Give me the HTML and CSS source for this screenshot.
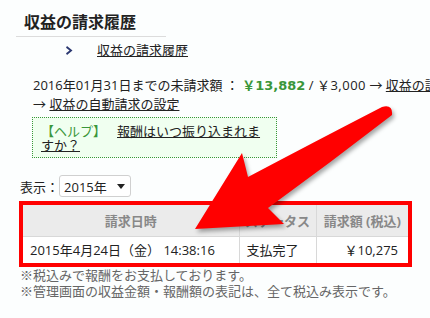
FILE: index.html
```html
<!DOCTYPE html>
<html lang="ja">
<head>
    <meta charset="UTF-8">
    <meta name="viewport" content="width=device-width, initial-scale=1.0">
    <title>収益の請求履歴</title>
    <link rel="stylesheet" href="styles.css">
</head>
<body>

<div class="page">
    <div class="head">
        <h1>収益の請求履歴</h1>
    </div>

    <div class="crumb">
        <svg class="chev" width="7" height="9" viewBox="0 0 7 9"><path d="M1 0 L6.5 4.5 L1 9 L0 7.3 L3.6 4.5 L0 1.7 Z" fill="#2a3770"/></svg>
        <a href="#">収益の請求履歴</a>
    </div>

    <div class="summary">
        <p class="line nowrap">2016年01月31日までの未請求額 ： <strong class="amount">￥13,882</strong> / <span class="limit">￥3,000</span> → <a href="#">収益の請求手続き</a></p>
        <p class="line">→ <a href="#">収益の自動請求の設定</a></p>
    </div>

    <div class="help">
        <span class="help-tag">【ヘルプ】</span><a href="#">報酬はいつ振り込まれますか？</a>
    </div>

    <div class="filter">
        <span>表示：</span>
        <div class="select">
            <span>2015年</span>
            <svg width="8" height="5" viewBox="0 0 8 5"><path d="M0 0 H8 L4 5 Z" fill="#222"/></svg>
        </div>
    </div>

    <div class="mark">
        <table class="history">
            <thead>
                <tr>
                    <th class="col-date">請求日時</th>
                    <th class="col-status">ステータス</th>
                    <th class="col-amount">請求額 (税込)</th>
                </tr>
            </thead>
            <tbody>
                <tr>
                    <td>2015年4月24日（金） 14:38:16</td>
                    <td>支払完了</td>
                    <td class="num">￥10,275</td>
                </tr>
            </tbody>
        </table>
    </div>

    <p class="note">※税込みで報酬をお支払しております。</p>
    <p class="note">※管理画面の収益金額・報酬額の表記は、全て税込み表示です。</p>

    <svg class="arrow" width="430" height="318" viewBox="0 0 430 318">
        <path d="M195 229 L242 153 L248 177 Q318 140 382 107 Q393 104 392 115 Q330 163 268 208 L284 224 Z" fill="#ff0000"/>
    </svg>
</div>

</body>
</html>
```

FILE: styles.css
```css
* {
    margin: 0;
    padding: 0;
    box-sizing: border-box;
}

html {
    overflow: hidden;
}

body {
    background: #fcfefe;
    font-family: "Open Sans", "Noto Sans CJK JP", sans-serif;
    font-size: 13px;
    color: #222;
}

a {
    color: #222;
    text-decoration: underline;
}

.page {
    position: relative;
    width: 430px;
    height: 318px;
    overflow: hidden;
}

.head {
    margin: 12px 0 0 16px;
    width: 150px;
    padding: 0 0 4px 8px;
    border-bottom: 1px solid #dcdcdc;
}

.head h1 {
    font-size: 16px;
    line-height: 20px;
    font-weight: bold;
}

.crumb {
    display: flex;
    align-items: center;
    margin-top: 4px;
    padding-left: 66px;
    line-height: 18px;
}

.chev {
    margin-right: 24px;
}

.summary {
    margin-top: 17px;
    padding-left: 33px;
}

.line {
    line-height: 18px;
}

.nowrap {
    white-space: nowrap;
    overflow: hidden;
}

.amount {
    font-family: "DejaVu Sans", "Noto Sans CJK JP", sans-serif;
    color: #3a963a;
    font-weight: bold;
}

.limit {
    letter-spacing: 0.5px;
}

.help {
    margin: 4px 0 0 32px;
    width: 245px;
    padding: 6px 8px 5px;
    border: 1px dotted #3a963a;
    background: #f0fff0;
    line-height: 14px;
}

.help-tag {
    color: #3a963a;
    margin-right: 11px;
}

.filter {
    display: flex;
    align-items: center;
    margin: 17px 0 0 20px;
}

.select {
    display: flex;
    align-items: center;
    justify-content: space-between;
    width: 72px;
    height: 22px;
    padding: 0 5px 0 4px;
    border: 1px solid #d0d0d0;
    border-radius: 3px;
    background: #fff;
}

.mark {
    margin: 4px 0 0 19px;
    width: 393px;
    border: 4px solid #ff0000;
}

.history {
    width: 100%;
    border-collapse: collapse;
}

.history th {
    height: 31px;
    background: #ebebeb;
    color: #888;
    font-weight: bold;
    border: 1px solid #d8d8d8;
    border-top: none;
}

.history td {
    height: 27px;
    padding: 0 7px;
    background: #fff;
    border: 1px solid #d8d8d8;
    border-bottom: none;
}

.history th:first-child,
.history td:first-child {
    border-left: none;
}

.history th:last-child,
.history td:last-child {
    border-right: none;
}

.col-date {
    width: 216px;
}

.col-status {
    width: 77px;
}

.history td.num {
    text-align: right;
    padding-right: 10px;
}

.note {
    padding-left: 20px;
    line-height: 16px;
    color: #666;
}

.arrow {
    position: absolute;
    top: 0;
    left: 0;
    pointer-events: none;
    filter: drop-shadow(2px 3px 2px rgba(0, 0, 0, 0.35));
}
```
